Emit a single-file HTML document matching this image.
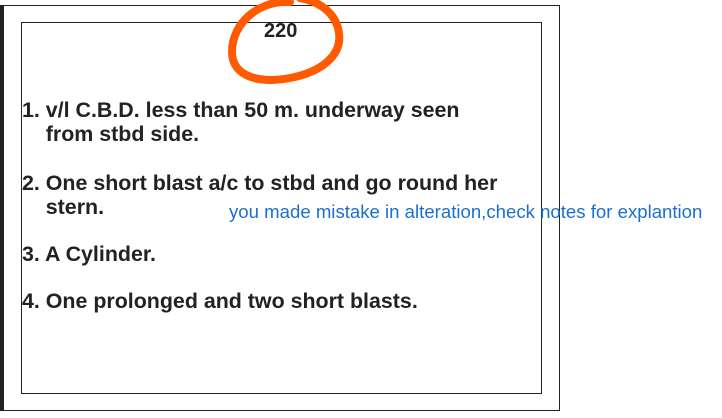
<!DOCTYPE html>
<html><head><style>
body{margin:0;width:722px;height:418px;background:#fff;position:relative;overflow:hidden;font-family:"Liberation Sans",Arial,sans-serif;}
.bar{position:absolute;left:0;top:5px;width:4px;height:406px;background:#222;}
.outer{position:absolute;left:3px;top:5px;width:556px;height:404px;border-top:1px solid #222;border-right:1px solid #222;border-bottom:1px solid #222;}
.inner{position:absolute;left:21px;top:22px;width:519px;height:370px;border:1px solid #222;}
.t{position:absolute;font-weight:bold;font-size:21.4px;color:#222;white-space:nowrap;line-height:24px;}
.blue{position:absolute;left:229px;top:201px;font-size:18.6px;color:#1a6fd0;white-space:nowrap;}
</style></head><body>
<div class="bar"></div>
<div class="outer"></div>
<div class="inner"></div>
<div class="t" style="left:264px;top:19px;font-size:20px">220</div>
<div class="t" style="left:22px;top:98px">1. v/l C.B.D. less than 50 m. underway seen<br>&nbsp;&nbsp;&nbsp;&nbsp;from stbd side.</div>
<div class="t" style="left:22px;top:171px">2. One short blast a/c to stbd and go round her<br>&nbsp;&nbsp;&nbsp;&nbsp;stern.</div>
<div class="t" style="left:22px;top:242px">3. A Cylinder.</div>
<div class="t" style="left:22px;top:289px">4. One prolonged and two short blasts.</div>
<div class="blue">you made mistake in alteration,check notes for explantion</div>
<svg style="position:absolute;left:0;top:0" width="722" height="418">
<path d="M290 2 C260 0 232 22 232 52 C232 76 258 84 290 78 C322 72 342 55 339 33 C336 12 318 1 300 -2" fill="none" stroke="#ff5a00" stroke-width="8" stroke-linecap="round"/>
</svg>
</body></html>
